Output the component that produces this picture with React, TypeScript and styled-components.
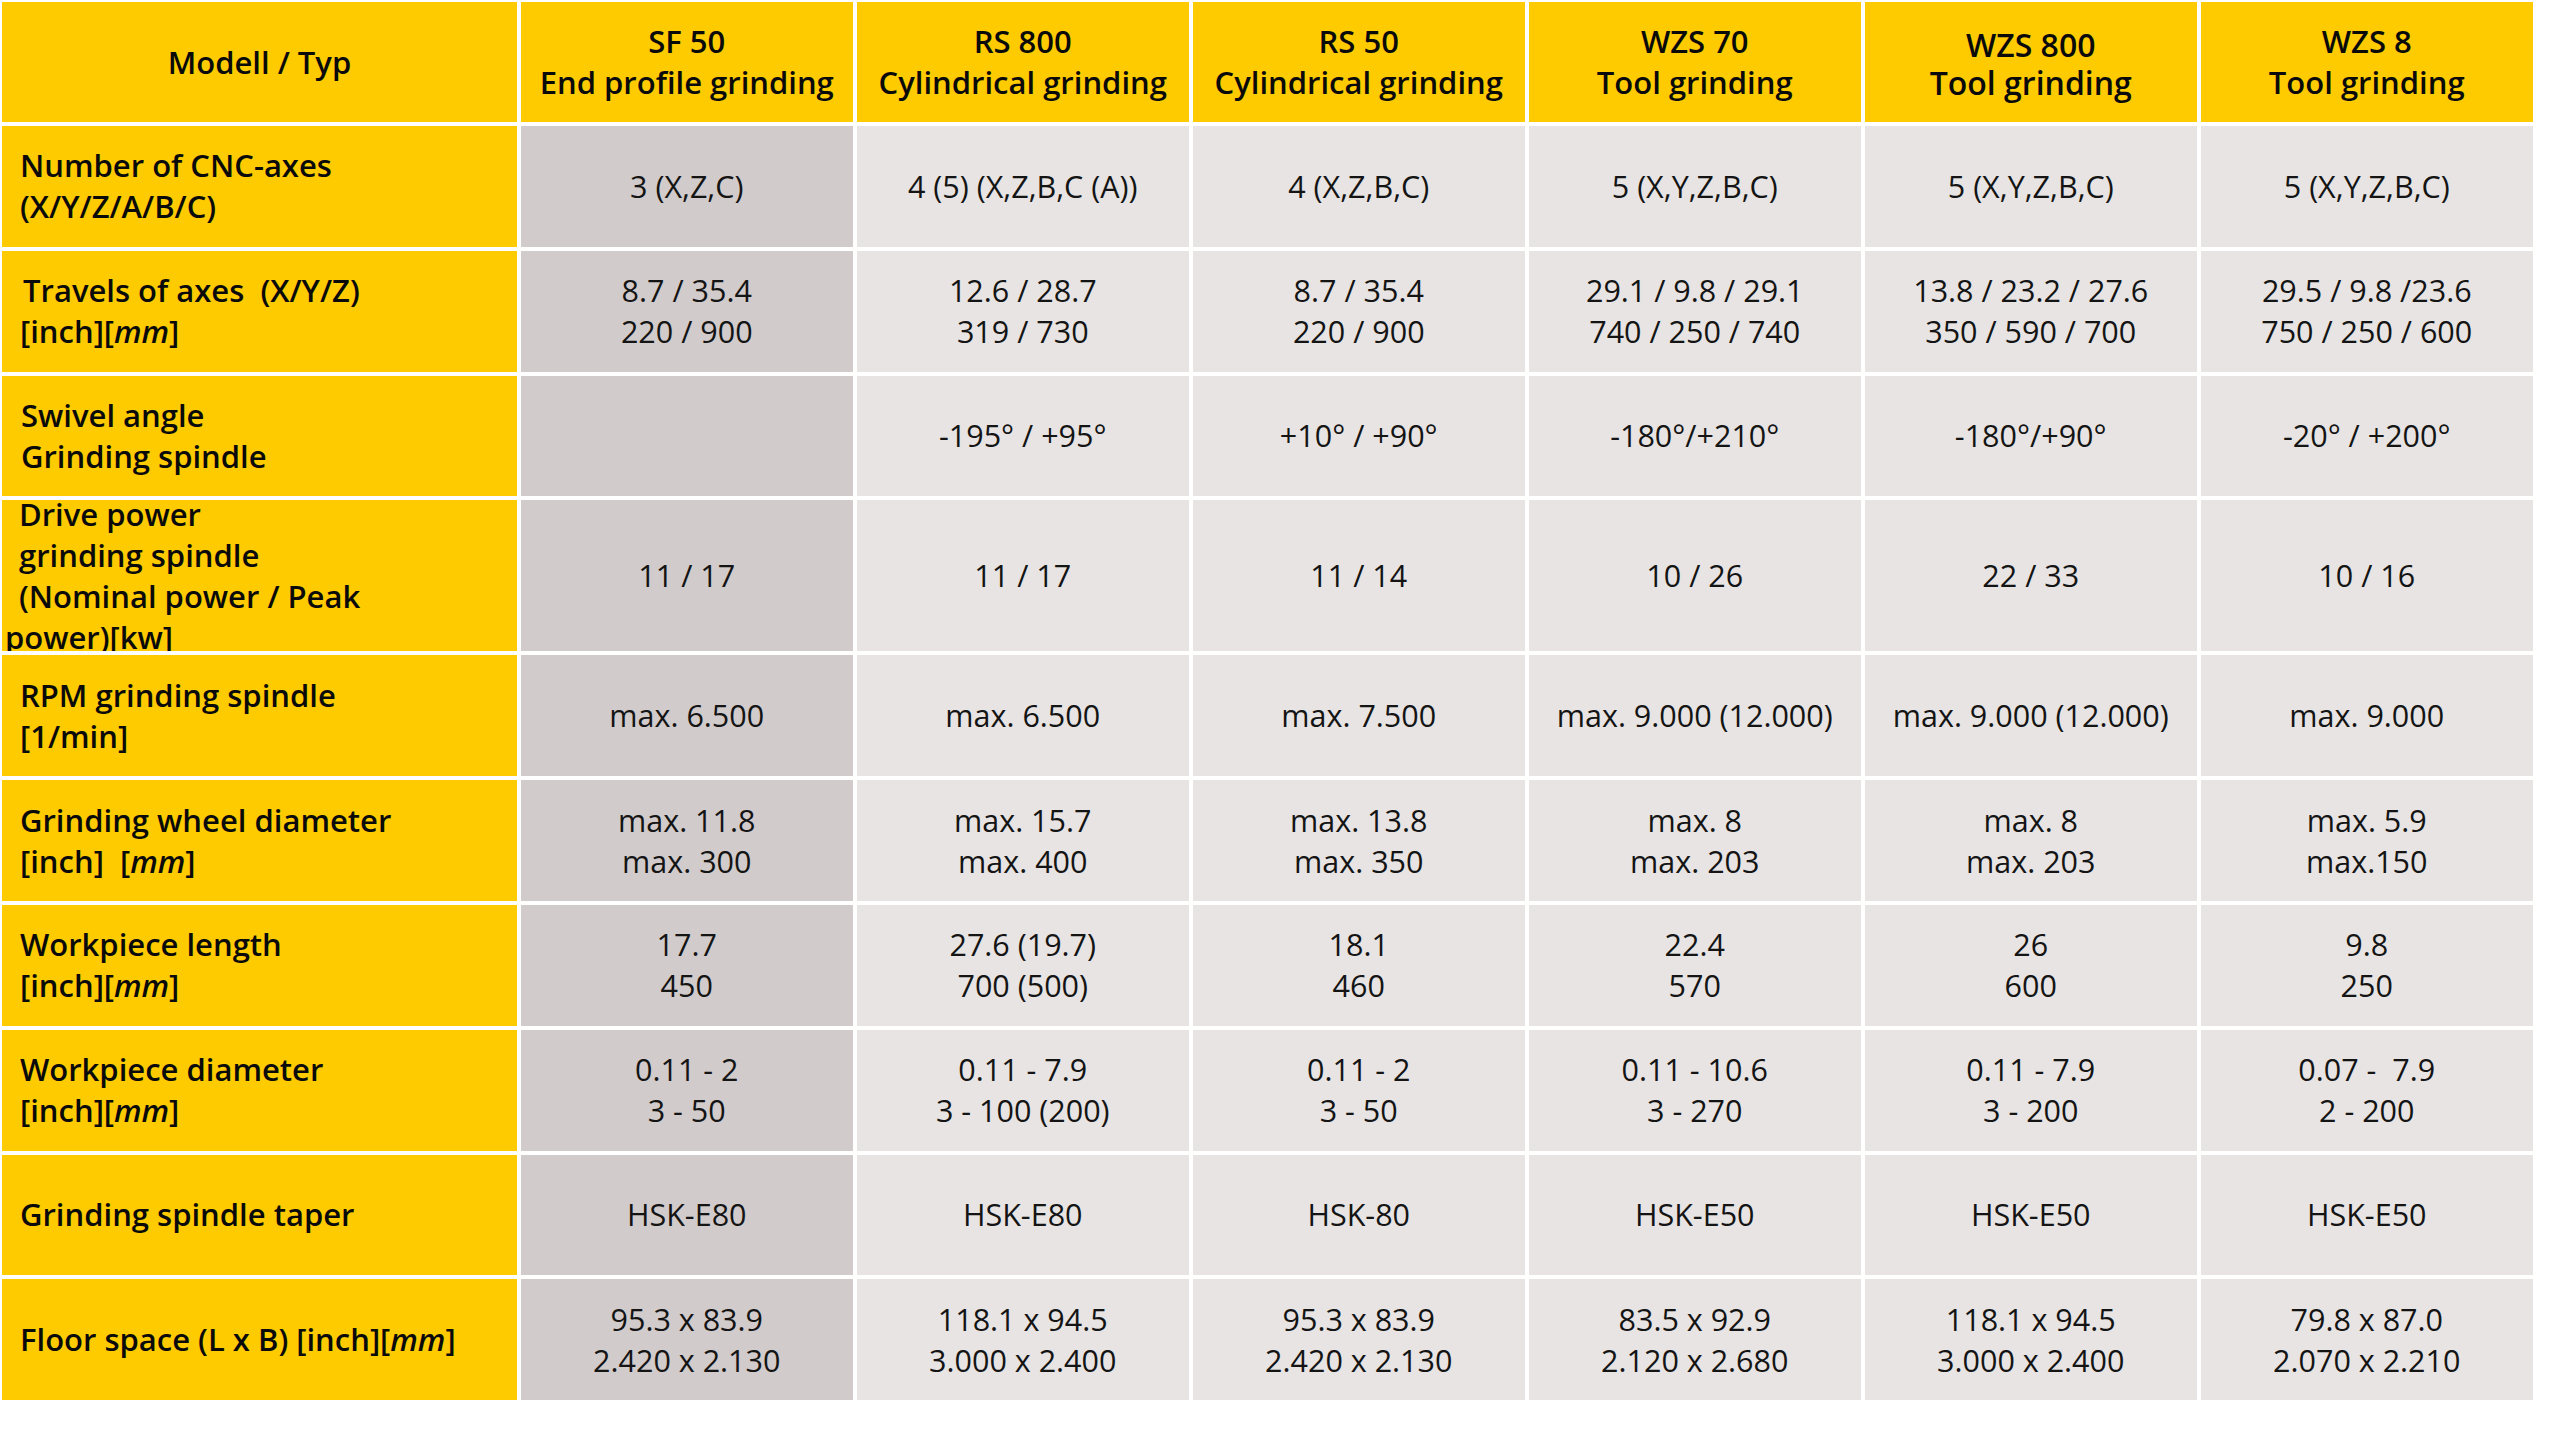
import React from "react";
import styled, { createGlobalStyle } from "styled-components";

const GlobalStyle = createGlobalStyle`
  html, body { margin: 0; padding: 0; background: #ffffff; }
  body {
    font-family: "Open Sans", "Liberation Sans", sans-serif;
    color: #141414;
  }
`;

const YELLOW = "#FECB00";
const SHADE_DARK = "#D1CBCB";
const SHADE_LIGHT = "#E7E4E3";

const Table = styled.div`
  display: grid;
  grid-template-columns: 515px repeat(6, 332.5px);
  grid-template-rows: 120px repeat(3, 120.8px) 151px repeat(6, 120.8px);
  column-gap: 3.5px;
  row-gap: 4px;
  padding: 2px 0 0 2px;
  width: max-content;
`;

const HeaderCell = styled.div<{ $big?: boolean }>`
  background: ${YELLOW};
  display: flex;
  flex-direction: column;
  align-items: center;
  justify-content: center;
  text-align: center;
  font-weight: 600;
  font-size: ${(p) => (p.$big ? "32px" : "31px")};
  line-height: ${(p) => (p.$big ? "38px" : "41px")};
  color: #0a0a0a;
  padding-top: ${(p) => (p.$big ? "4px" : "0")};
`;

const LabelCell = styled.div<{ $top?: boolean; $pad?: number }>`
  background: ${YELLOW};
  display: flex;
  flex-direction: column;
  justify-content: ${(p) => (p.$top ? "flex-start" : "center")};
  padding-left: ${(p) => (p.$pad ?? 18)}px;
  font-weight: 600;
  font-size: 31px;
  line-height: 41px;
  color: #0a0a0a;
  overflow: hidden;
`;

const LabelText = styled.div<{ $shift?: number }>`
  margin-top: ${(p) => p.$shift ?? 0}px;
`;

const ValueCell = styled.div<{ $dark?: boolean }>`
  background: ${(p) => (p.$dark ? SHADE_DARK : SHADE_LIGHT)};
  display: flex;
  flex-direction: column;
  align-items: center;
  justify-content: center;
  text-align: center;
  font-weight: 400;
  font-size: 30.5px;
  line-height: 41px;
  color: #141414;
`;

const Line = styled.span<{ $indent?: number }>`
  display: block;
  white-space: pre;
  padding-left: ${(p) => p.$indent ?? 0}px;
`;

const Unit = styled.em`
  font-style: italic;
`;

type Label = { lines: React.ReactNode[]; indent?: number[]; top?: boolean; pad?: number; shift?: number };
type Row = { label: Label; values: string[][] };

const headers: { model: string; kind: string; big?: boolean }[] = [
  { model: "SF 50", kind: "End profile grinding" },
  { model: "RS 800", kind: "Cylindrical grinding" },
  { model: "RS 50", kind: "Cylindrical grinding" },
  { model: "WZS 70", kind: "Tool grinding" },
  { model: "WZS 800", kind: "Tool grinding", big: true },
  { model: "WZS 8", kind: "Tool grinding" },
];

const rows: Row[] = [
  {
    label: { lines: ["Number of CNC-axes", "(X/Y/Z/A/B/C)"] },
    values: [
      ["3 (X,Z,C)"],
      ["4 (5) (X,Z,B,C (A))"],
      ["4 (X,Z,B,C)"],
      ["5 (X,Y,Z,B,C)"],
      ["5 (X,Y,Z,B,C)"],
      ["5 (X,Y,Z,B,C)"],
    ],
  },
  {
    label: {
      lines: ["Travels of axes  (X/Y/Z)", <>[inch][<Unit>mm</Unit>]</>],
      indent: [3, 0],
    },
    values: [
      ["8.7 / 35.4", "220 / 900"],
      ["12.6 / 28.7", "319 / 730"],
      ["8.7 / 35.4", "220 / 900"],
      ["29.1 / 9.8 / 29.1", "740 / 250 / 740"],
      ["13.8 / 23.2 / 27.6", "350 / 590 / 700"],
      ["29.5 / 9.8 /23.6", "750 / 250 / 600"],
    ],
  },
  {
    label: { lines: ["Swivel angle", "Grinding spindle"], indent: [1, 1] },
    values: [[""], ["-195° / +95°"], ["+10° / +90°"], ["-180°/+210°"], ["-180°/+90°"], ["-20° / +200°"]],
  },
  {
    label: {
      lines: ["Drive power", "grinding spindle", "(Nominal power / Peak", "power)[kw]"],
      indent: [14, 14, 14, 0],
      top: true,
      pad: 3,
      shift: -6,
    },
    values: [["11 / 17"], ["11 / 17"], ["11 / 14"], ["10 / 26"], ["22 / 33"], ["10 / 16"]],
  },
  {
    label: { lines: ["RPM grinding spindle", "[1/min]"] },
    values: [
      ["max. 6.500"],
      ["max. 6.500"],
      ["max. 7.500"],
      ["max. 9.000 (12.000)"],
      ["max. 9.000 (12.000)"],
      ["max. 9.000"],
    ],
  },
  {
    label: { lines: ["Grinding wheel diameter", <>[inch]  [<Unit>mm</Unit>]</>] },
    values: [
      ["max. 11.8", "max. 300"],
      ["max. 15.7", "max. 400"],
      ["max. 13.8", "max. 350"],
      ["max. 8", "max. 203"],
      ["max. 8", "max. 203"],
      ["max. 5.9", "max.150"],
    ],
  },
  {
    label: { lines: ["Workpiece length", <>[inch][<Unit>mm</Unit>]</>] },
    values: [
      ["17.7", "450"],
      ["27.6 (19.7)", "700 (500)"],
      ["18.1", "460"],
      ["22.4", "570"],
      ["26", "600"],
      ["9.8", "250"],
    ],
  },
  {
    label: { lines: ["Workpiece diameter", <>[inch][<Unit>mm</Unit>]</>] },
    values: [
      ["0.11 - 2", "3 - 50"],
      ["0.11 - 7.9", "3 - 100 (200)"],
      ["0.11 - 2", "3 - 50"],
      ["0.11 - 10.6", "3 - 270"],
      ["0.11 - 7.9", "3 - 200"],
      ["0.07 -  7.9", "2 - 200"],
    ],
  },
  {
    label: { lines: ["Grinding spindle taper"] },
    values: [["HSK-E80"], ["HSK-E80"], ["HSK-80"], ["HSK-E50"], ["HSK-E50"], ["HSK-E50"]],
  },
  {
    label: { lines: [<>Floor space (L x B) [inch][<Unit>mm</Unit>]</>] },
    values: [
      ["95.3 x 83.9", "2.420 x 2.130"],
      ["118.1 x 94.5", "3.000 x 2.400"],
      ["95.3 x 83.9", "2.420 x 2.130"],
      ["83.5 x 92.9", "2.120 x 2.680"],
      ["118.1 x 94.5", "3.000 x 2.400"],
      ["79.8 x 87.0", "2.070 x 2.210"],
    ],
  },
];

export default function App() {
  return (
    <>
      <GlobalStyle />
      <Table>
        <HeaderCell>
          <Line>Modell / Typ</Line>
        </HeaderCell>
        {headers.map((h) => (
          <HeaderCell key={h.model} $big={h.big}>
            <Line>{h.model}</Line>
            <Line>{h.kind}</Line>
          </HeaderCell>
        ))}
        {rows.map((r, ri) => (
          <React.Fragment key={ri}>
            <LabelCell $top={r.label.top} $pad={r.label.pad}>
              <LabelText $shift={r.label.shift}>
                {r.label.lines.map((l, li) => (
                  <Line key={li} $indent={r.label.indent ? r.label.indent[li] : 0}>
                    {l}
                  </Line>
                ))}
              </LabelText>
            </LabelCell>
            {r.values.map((v, vi) => (
              <ValueCell key={vi} $dark={vi === 0}>
                {v.map((line, li) => (
                  <Line key={li}>{line}</Line>
                ))}
              </ValueCell>
            ))}
          </React.Fragment>
        ))}
      </Table>
    </>
  );
}
